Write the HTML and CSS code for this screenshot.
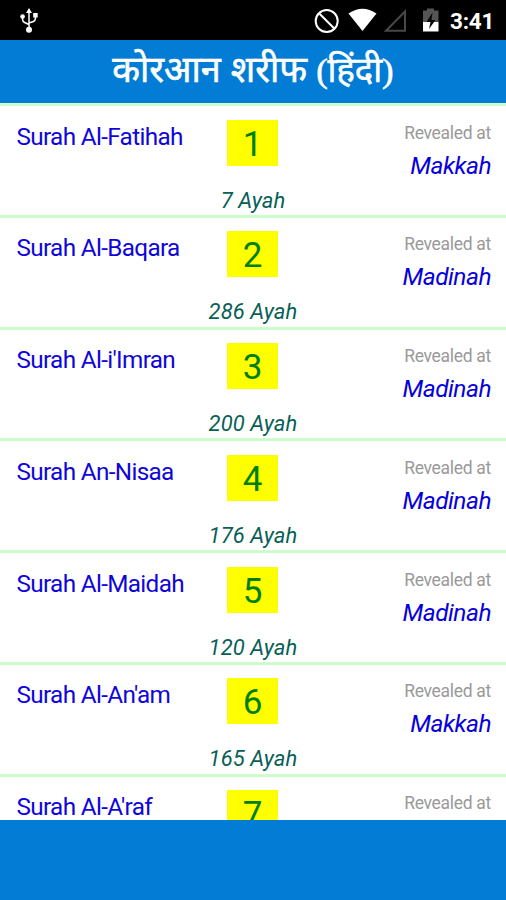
FILE: index.html
```html
<!DOCTYPE html>
<html lang="en">
<head>
<meta charset="utf-8">
<title>कोरआन शरीफ (हिंदी)</title>
<link rel="stylesheet" href="styles.css">
</head>
<body>
<header class="status">
  <svg class="usb" width="18" height="26" viewBox="0 0 18 26" fill="none" stroke="#fff" stroke-width="1.5"><path d="M9 4v18M2.600 8v3.500q0 2 2 3L9 16.500M15.400 7v3.500q0 2-2 3L9 15"/><path d="M9 0l3 5H6zM13.200 5h4.500v4.500h-4.500z" fill="#fff" stroke="none"/><circle cx="2.600" cy="8.500" r="2.300" fill="#fff" stroke="none"/><circle cx="9" cy="21.700" r="3" fill="#fff" stroke="none"/></svg>
  <svg class="icons" width="126" height="26" viewBox="0 0 126 26"><g fill="none" stroke="#fff" stroke-width="2"><circle cx="13.700" cy="13" r="11"/><path d="M5.800 5l16 16"/></g><path d="M35.500 5.500Q49.500-4 63.500 5.500L49.500 23z" fill="#fff"/><path d="M73 22.800L92 3.500v19.300z" fill="none" stroke="#484848" stroke-width="2"/><path d="M110 2.500h4V.5h7v2h4.500V14H110z" fill="#555"/><path d="M110 14h15.500v9.500H110z" fill="#fff"/><path d="M119.500 4.500l-6 9.500h4l-1.500 7 6.500-9h-4z" fill="#080808"/></svg>
  <span class="clock">3:41</span>
</header>
<h1 class="title"><span>कोरआन <span class="second">शरीफ</span> <span class="lang">(हिंदी)</span></span></h1>
<main class="list">
  <article class="row"><h2 class="name">Surah Al-Fatihah</h2><div class="middle"><span class="number">1</span><span class="ayah">7 Ayah</span></div><div class="place"><small>Revealed at</small><em>Makkah</em></div></article>
  <article class="row"><h2 class="name">Surah Al-Baqara</h2><div class="middle"><span class="number">2</span><span class="ayah">286 Ayah</span></div><div class="place"><small>Revealed at</small><em>Madinah</em></div></article>
  <article class="row"><h2 class="name">Surah Al-i'Imran</h2><div class="middle"><span class="number">3</span><span class="ayah">200 Ayah</span></div><div class="place"><small>Revealed at</small><em>Madinah</em></div></article>
  <article class="row"><h2 class="name">Surah An-Nisaa</h2><div class="middle"><span class="number">4</span><span class="ayah">176 Ayah</span></div><div class="place"><small>Revealed at</small><em>Madinah</em></div></article>
  <article class="row"><h2 class="name">Surah Al-Maidah</h2><div class="middle"><span class="number">5</span><span class="ayah">120 Ayah</span></div><div class="place"><small>Revealed at</small><em>Madinah</em></div></article>
  <article class="row"><h2 class="name">Surah Al-An'am</h2><div class="middle"><span class="number">6</span><span class="ayah">165 Ayah</span></div><div class="place"><small>Revealed at</small><em>Makkah</em></div></article>
  <article class="row"><h2 class="name">Surah Al-A'raf</h2><div class="middle"><span class="number">7</span></div><div class="place"><small>Revealed at</small></div></article>
</main>
<footer class="bottom"></footer>
</body>
</html>
```
FILE: styles.css
```css
* { box-sizing: border-box; }
body {
  margin: 0;
  height: 900px;
  overflow: hidden;
  display: flex;
  flex-direction: column;
  background: #fff;
  font-family: Roboto, sans-serif;
}
.status {
  height: 40px;
  flex: none;
  display: flex;
  align-items: flex-start;
  padding: 8px 13px 0 20px;
  background: #000;
  color: #fff;
}
.icons { margin-left: auto; }
.clock {
  width: 43px;
  margin-left: 11px;
  font-size: 22.5px;
  line-height: 27px;
  font-weight: 700;
  letter-spacing: -0.2px;
  white-space: nowrap;
}
.title {
  height: 63px;
  flex: none;
  margin: 0;
  display: flex;
  justify-content: center;
  background: #027cd5;
  color: #fff;
  font: 400 36px/60px "Liberation Serif", "Noto Sans Devanagari", serif;
  -webkit-text-stroke: 0.6px #fff;
  white-space: nowrap;
}
.second { margin-left: 1px; }
.lang { font-size: 34.5px; }
.list { flex: 1; min-height: 0; overflow: hidden; }
.row {
  height: 111.75px;
  display: grid;
  grid-template-columns: 1fr 120px 1fr;
  border-top: 3px solid #ccffcc;
}
.name {
  margin: 14.500px 0 0 16.5px;
  color: #1006dc;
  font-size: 24.3px;
  line-height: 32px;
  font-weight: 400;
  letter-spacing: -0.66px;
  white-space: nowrap;
}
.middle {
  display: flex;
  flex-direction: column;
  align-items: center;
  padding-top: 13.700px;
}
.number {
  width: 51px;
  height: 46px;
  margin-right: 1px;
  background: #ff0;
  color: #008000;
  font-size: 35px;
  line-height: 49px;
  text-align: center;
}
.ayah {
  margin-top: 21px;
  color: #095f57;
  font-size: 22px;
  line-height: 28px;
  font-style: italic;
  letter-spacing: 0.1px;
}
.place {
  display: flex;
  flex-direction: column;
  align-items: flex-end;
  padding: 14.600px 15px 0 0;
}
.place small {
  color: #999;
  font-size: 17.5px;
  line-height: 24px;
  letter-spacing: -0.3px;
}
.place em {
  margin-top: 5px;
  color: #0800dc;
  font-size: 24.5px;
  line-height: 32px;
  letter-spacing: -0.5px;
}
.bottom { height: 80px; flex: none; background: #027cd5; }
```
